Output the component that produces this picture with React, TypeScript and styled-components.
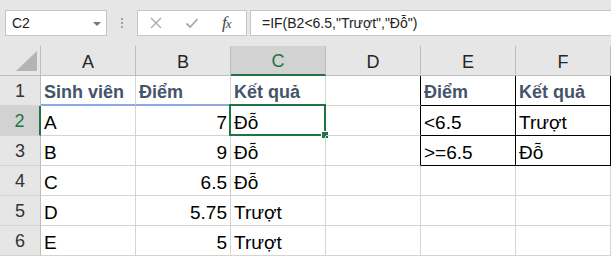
import React from "react";
import styled, { createGlobalStyle, css } from "styled-components";

const GlobalStyle = createGlobalStyle`
  html, body { margin: 0; padding: 0; background: #ffffff; overflow: hidden; }
  #root { width: 611px; height: 256px; overflow: hidden; }
`;

const GREEN = "#217346";
const GRID = "#d4d4d4";
const HEAD_LINE = "#bdbdbd";

const Window = styled.div`
  width: 611px;
  height: 256px;
  overflow: hidden;
  display: flex;
  flex-direction: column;
  font-family: "Liberation Sans", Arial, sans-serif;
`;

const FormulaBar = styled.div`
  height: 46px;
  flex: 0 0 46px;
  box-sizing: border-box;
  background: #e6e6e6;
  display: flex;
  align-items: flex-start;
  padding: 10px 0 0 5px;
`;

const NameBox = styled.div`
  width: 102px;
  height: 26px;
  box-sizing: border-box;
  border: 1px solid #c6c6c6;
  background: #ffffff;
  display: flex;
  align-items: center;
  justify-content: space-between;
  padding: 0 5px 0 6px;
  font-size: 14px;
  color: #222;
`;

const Caret = styled.span`
  width: 0;
  height: 0;
  border-left: 4px solid transparent;
  border-right: 4px solid transparent;
  border-top: 4px solid #777;
  margin-top: 1px;
`;

const Grip = styled.div`
  width: 30px;
  height: 26px;
  display: flex;
  flex-direction: column;
  align-items: center;
  justify-content: center;
  gap: 2px;
`;

const GripDot = styled.span`
  width: 2px;
  height: 2px;
  background: #a0a0a0;
`;

const FxButtons = styled.div`
  width: 110px;
  height: 26px;
  box-sizing: border-box;
  border: 1px solid #c6c6c6;
  background: #ffffff;
  display: flex;
  align-items: center;
  padding-left: 11px;
  gap: 22px;
`;

const FxLabel = styled.span`
  font-family: "Liberation Serif", "Times New Roman", serif;
  font-style: italic;
  font-size: 17px;
  color: #444444;
  letter-spacing: -1px;
  margin-left: 1px;
  & > small {
    font-size: 13px;
  }
`;

const FormulaInput = styled.div`
  flex: 1 0 auto;
  height: 26px;
  margin: 0 -20px 0 3px;
  box-sizing: border-box;
  border: 1px solid #c6c6c6;
  background: #ffffff;
  display: flex;
  align-items: center;
  padding-left: 11px;
  font-size: 14px;
  color: #222;
  white-space: nowrap;
`;

const Sheet = styled.div`
  display: grid;
  grid-template-columns: 41px repeat(6, 95px);
  grid-template-rows: 30px repeat(6, 30px);
  background: #ffffff;
`;

const Corner = styled.div`
  box-sizing: border-box;
  background: #e6e6e6;
  border-right: 1px solid ${HEAD_LINE};
  border-bottom: 1px solid ${HEAD_LINE};
  display: flex;
  align-items: flex-end;
  justify-content: flex-end;
  padding: 0 3px 4px 0;
`;

const ColHead = styled.div<{ $selected?: boolean }>`
  box-sizing: border-box;
  background: ${(p) => (p.$selected ? "#d2d2d2" : "#e6e6e6")};
  border-right: 1px solid ${HEAD_LINE};
  border-bottom: ${(p) => (p.$selected ? `2px solid ${GREEN}` : `1px solid ${HEAD_LINE}`)};
  display: flex;
  align-items: center;
  justify-content: center;
  padding-top: 3px;
  font-size: 18px;
  color: ${(p) => (p.$selected ? GREEN : "#262626")};
`;

const RowHead = styled.div<{ $selected?: boolean }>`
  box-sizing: border-box;
  background: ${(p) => (p.$selected ? "#d2d2d2" : "#e6e6e6")};
  border-right: ${(p) => (p.$selected ? `2px solid ${GREEN}` : `1px solid ${HEAD_LINE}`)};
  border-bottom: 1px solid ${GRID};
  display: flex;
  align-items: center;
  justify-content: center;
  padding-top: 1px;
  font-size: 18px;
  color: ${(p) => (p.$selected ? GREEN : "#333333")};
`;

const Cell = styled.div<{
  $right?: boolean;
  $heading?: boolean;
  $br?: string;
  $bb?: string;
  $bbw?: number;
}>`
  position: relative;
  box-sizing: border-box;
  border-right: 1px solid ${(p) => p.$br || GRID};
  border-bottom: ${(p) => p.$bbw || 1}px solid ${(p) => p.$bb || GRID};
  display: flex;
  align-items: flex-end;
  justify-content: ${(p) => (p.$right ? "flex-end" : "flex-start")};
  padding: 0 3px ${(p) => (p.$bbw === 2 ? 2 : 3)}px 3px;
  line-height: 19px;
  white-space: nowrap;
  ${(p) =>
    p.$heading
      ? css`
          font-size: 18px;
          font-weight: bold;
          color: #44546a;
        `
      : css`
          font-size: 19px;
          color: #000000;
        `}
`;

const Selection = styled.div`
  position: absolute;
  left: -2px;
  top: -2px;
  right: -1px;
  bottom: -1px;
  border: 2px solid ${GREEN};
  pointer-events: none;
`;

const FillHandle = styled.span`
  position: absolute;
  right: -5px;
  bottom: -5px;
  width: 6px;
  height: 6px;
  background: ${GREEN};
  border: 1px solid #ffffff;
`;

type CellSpec = {
  text?: string;
  right?: boolean;
  heading?: boolean;
  br?: string;
  bb?: string;
  bbw?: number;
  selected?: boolean;
};

const BLACK = "#000000";
const BLUE = "#8ea9db";

const rows: CellSpec[][] = [
  [
    { text: "Sinh viên", heading: true, bb: BLUE, bbw: 2 },
    { text: "Điểm", heading: true, bb: BLUE, bbw: 2 },
    { text: "Kết quả", heading: true },
    { br: BLACK },
    { text: "Điểm", heading: true, br: BLACK, bb: BLACK },
    { text: "Kết quả", heading: true, br: BLACK, bb: BLACK },
  ],
  [
    { text: "A" },
    { text: "7", right: true },
    { text: "Đỗ", selected: true },
    { br: BLACK },
    { text: "<6.5", br: BLACK, bb: BLACK },
    { text: "Trượt", br: BLACK, bb: BLACK },
  ],
  [
    { text: "B" },
    { text: "9", right: true },
    { text: "Đỗ" },
    { br: BLACK },
    { text: ">=6.5", br: BLACK, bb: BLACK },
    { text: "Đỗ", br: BLACK, bb: BLACK },
  ],
  [{ text: "C" }, { text: "6.5", right: true }, { text: "Đỗ" }, {}, {}, {}],
  [{ text: "D" }, { text: "5.75", right: true }, { text: "Trượt" }, {}, {}, {}],
  [{ text: "E" }, { text: "5", right: true }, { text: "Trượt" }, {}, {}, {}],
];

const columns = ["A", "B", "C", "D", "E", "F"];

const CloseIcon = () => (
  <svg width="14" height="14" viewBox="0 0 14 14">
    <path d="M2 2 L12 12 M12 2 L2 12" stroke="#a9a9a9" strokeWidth="1.3" fill="none" />
  </svg>
);

const CheckIcon = () => (
  <svg width="14" height="14" viewBox="0 0 14 14">
    <path d="M1.5 7.5 L5.2 11 L12.5 3" stroke="#a9a9a9" strokeWidth="1.8" fill="none" />
  </svg>
);

const CornerTriangle = () => (
  <svg width="21" height="20" viewBox="0 0 21 20">
    <path d="M0 20 L21 20 L21 0 Z" fill="#b4b4b4" />
  </svg>
);

export default function App() {
  return (
    <>
      <GlobalStyle />
      <Window>
        <FormulaBar>
          <NameBox>
            <span>C2</span>
            <Caret />
          </NameBox>
          <Grip>
            <GripDot />
            <GripDot />
            <GripDot />
          </Grip>
          <FxButtons>
            <CloseIcon />
            <CheckIcon />
            <FxLabel>
              f<small>x</small>
            </FxLabel>
          </FxButtons>
          <FormulaInput>=IF(B2&lt;6.5,"Trượt","Đỗ")</FormulaInput>
        </FormulaBar>
        <Sheet>
          <Corner>
            <CornerTriangle />
          </Corner>
          {columns.map((c) => (
            <ColHead key={c} $selected={c === "C"}>
              {c}
            </ColHead>
          ))}
          {rows.map((row, ri) => (
            <React.Fragment key={ri}>
              <RowHead $selected={ri === 1}>{ri + 1}</RowHead>
              {row.map((cell, ci) => (
                <Cell
                  key={ci}
                  $right={cell.right}
                  $heading={cell.heading}
                  $br={cell.br}
                  $bb={cell.bb}
                  $bbw={cell.bbw}
                >
                  {cell.text}
                  {cell.selected && (
                    <Selection>
                      <FillHandle />
                    </Selection>
                  )}
                </Cell>
              ))}
            </React.Fragment>
          ))}
        </Sheet>
      </Window>
    </>
  );
}
